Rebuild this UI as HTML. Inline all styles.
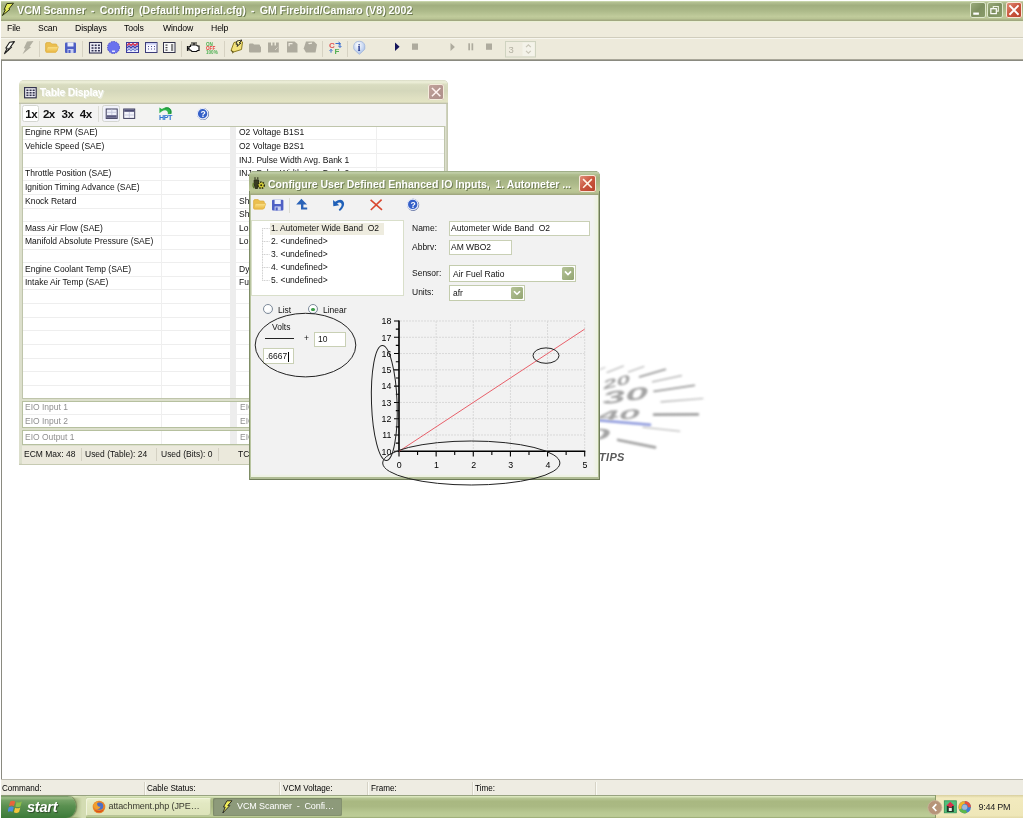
<!DOCTYPE html>
<html>
<head>
<meta charset="utf-8">
<title>VCM Scanner</title>
<style>
*{box-sizing:border-box;margin:0;padding:0}
html,body{width:1024px;height:819px;overflow:hidden;background:#fff}
body{filter:blur(0.45px);position:relative;font-family:"Liberation Sans",sans-serif;font-size:9px;color:#000}
.abs{position:absolute}
.t{position:absolute;white-space:nowrap;line-height:1}
/* main title bar */
#title{left:0;top:1px;width:1024px;height:20px;background:linear-gradient(#d3dfb8 0,#b3c092 7%,#a1ae7f 22%,#adba8a 50%,#c0cb9b 77%,#b9c494 88%,#a1a880 97%,#a1a880 100%)}
#title .cap{left:17px;top:4px;font-weight:bold;font-size:10.6px;color:#fff;text-shadow:1px 1px 0 #6d7b52;letter-spacing:0.1px;word-spacing:-0.5px}
.wbtn{position:absolute;top:0.8px;width:16.2px;height:16.6px;border-radius:2.5px;background:linear-gradient(135deg,#9fb07f,#7e9060 50%,#8c9e6d);box-shadow:inset 0 0 0 1px #dfe8cc;overflow:hidden}
.wbtn svg{position:absolute;left:0;top:0;width:100%;height:100%}
.wbtn.close{background:linear-gradient(135deg,#e39580,#c9553d 50%,#b8402a);box-shadow:inset 0 0 0 1px #f6e9d9}
/* menu */
#menu{left:0;top:21px;width:1024px;height:17px;background:#eeebdc;border-top:1px solid #eaf0d4;border-bottom:1px solid #d0cdbd}
#menu .t{top:1.6px;font-size:8.7px;letter-spacing:-0.14px}
#tool{left:0;top:38px;width:1024px;height:22px;background:#edeadb;border-top:1px solid #f7f6ee;border-bottom:1px solid #a9a799}
#mdi{left:1px;top:60px;width:1022px;height:718.6px;background:#fff;border-left:1px solid #8a8a80;border-top:1px solid #8a8a80}
#status{left:0;top:778.6px;width:1024px;height:17px;background:#eeece2;border-top:1px solid #bdbbb0}
#status .t{top:3.4px;font-size:9.5px;transform:scaleX(0.853);transform-origin:0 0}
#task{left:0;top:795px;width:1024px;height:23px;background:linear-gradient(#98a381 0,#98a381 3%,#dde9bf 6%,#cbd9ac 10%,#b8c795 14%,#a9b881 27%,#aab983 50%,#b8c892 76%,#bdcc97 93%,#9fb07a 98%)}

#td{left:19.2px;top:80px;width:428.4px;height:384.5px;background:#dcdfcc;border-radius:5px 5px 0 0;overflow:hidden;box-shadow:inset -1.6px -1.2px 0 #c6cab2}
.tdtitle{left:0;top:0;width:100%;height:23.5px;background:linear-gradient(#d9dbc5 0,#eef0da 8%,#d9dcc0 20%,#d4d7bb 45%,#dfe0c2 75%,#e3e4c4 92%,#c0c2ac 97%,#c0c2ac 100%);border-radius:5px 5px 0 0}
.tdtitle .t{font-weight:bold;font-size:10.4px;letter-spacing:-0.2px;color:#fff;text-shadow:1px 1px 0 #e9ecdf}
.tdtool{left:2.2px;top:23.5px;width:424.6px;height:22px;background:#f3f3f2}
.tdgrid{left:2.6px;top:45.5px;width:423.6px;height:273.5px;background:#fff;border:1px solid #bfc5ab;border-width:1px 1px 1.5px 1px;overflow:hidden}
.rl{left:0;width:100%;height:1px;background:#eeeeee;margin-top:-0.6px}
.t.g{font-size:9.4px;color:#111;transform:scaleX(0.905);transform-origin:0 0;margin-top:-1.6px}
.t.ge{font-size:9.4px;color:#8f8f8f;transform:scaleX(0.905);transform-origin:0 0;margin-top:-1.6px}
.eio{left:3px;width:423.5px;background:#fff;border:1px solid #b6c09f;border-width:1px 1px 1.5px 1px;overflow:hidden}
.tdstat{left:3px;top:366px;width:423.5px;height:17.5px;background:#ebe9dc}
.tdstat .t{font-size:9.4px;color:#111;transform:scaleX(0.905);transform-origin:0 0;margin-top:-1px}
.vs{top:2px;width:1px;height:13px;background:#d4d1c3}

#dlg{left:248.5px;top:171px;width:351.5px;height:308.5px;background:#7f8d62;border-radius:5px 5px 0 0;overflow:hidden}
.dtitle{left:0;top:0;width:100%;height:24px;background:linear-gradient(#8f9f78 0,#c5d2ac 7%,#b0bf90 14%,#a3b181 28%,#adba8a 55%,#bcc897 80%,#b6c191 90%,#a1a880 98%);border-radius:5px 5px 0 0}
.dtitle .t{font-weight:bold;font-size:10.5px;color:#fff;text-shadow:1px 1px 0 #6d7b52}
.dbody{left:1px;top:24px;width:349.5px;height:283px;background:#f2f2f2;border:1.5px solid #e6ecd8;border-top:0}
.tree{left:0.5px;top:25px;width:153px;height:76px;background:#fff;border:1px solid #d9dfca}
.tree .sel{left:17.8px;top:1.5px;width:114px;height:12.5px;background:#eeecdf}
.t.f{font-size:9.4px;color:#111;transform:scaleX(0.905);transform-origin:0 0;margin-top:-1px}
.inp{background:#fff;border:1px solid #c9d0b5}
.cmb{background:#fff;border:1px solid #c3ccad}
.cbtn{right:1px;top:1px;bottom:1px;width:12px;background:linear-gradient(135deg,#b5c398,#93a571);border-radius:1.5px}
.radio{width:10.3px;height:10.3px;border-radius:50%;border:1px solid #7d8a9a;background:radial-gradient(circle at 35% 35%,#fff 40%,#e4e8ec)}
.radio.on::after{content:"";position:absolute;left:2.4px;top:2.4px;width:3.6px;height:3.6px;border-radius:50%;background:#3f9f4a}

.startb{left:0;top:0.5px;width:76px;height:22.2px;border-radius:0 9px 11px 0/0 12px 12px 0;background:linear-gradient(#6f9460 0,#9dbd88 8%,#74a266 20%,#5a9050 45%,#4a8545 75%,#3c7a38 100%);box-shadow:1px 0 1.5px #5d7045}
.st{left:27px;top:4px;font-size:14.5px;font-weight:bold;font-style:italic;color:#fff;text-shadow:1px 1px 1px #2d4a28;letter-spacing:-0.2px}
.tb{top:2.8px;height:18.4px;border-radius:2px;background:linear-gradient(#e9efcc 0,#e2e8c2 30%,#dce3b9 100%);box-shadow:inset 1px 1px 0 #f0f4dc,inset -1px -1px 0 #b9c498}
.tb.on{background:#8d9a7a;box-shadow:inset 1px 1px 1px #7c8868,inset -1px -1px 0 #84916f}
.tb .t{font-size:9px;letter-spacing:-0.1px}
.tray{left:934.6px;top:0;width:89.4px;height:24px;background:linear-gradient(#d8cf9e 0,#f2eabe 12%,#efe7b9 85%,#ddd3a0 100%);border-left:1px solid #8a9a68}
.tray .t{font-size:9px;letter-spacing:-0.25px}

.pbtn{background:#fff;border:1px solid #d4d6d0;border-radius:2.5px}
.t.x{top:4.6px;font-size:11.6px;font-weight:bold;color:#111;letter-spacing:-0.45px}
.sv{top:2px;width:1px;height:13px;background:#d6d3c6;box-shadow:1px 0 0 #fafaf4}
.wbtn.close.tdc{background:linear-gradient(135deg,#c4a59e,#b3948e 60%,#ad8f8a);box-shadow:inset 0 0 0 1px #f4ecdc}
</style>
</head>
<body>
<!-- MAIN TITLE -->
<div id="title" class="abs">
  <svg class="abs" style="left:0;top:-1px" width="18" height="20" viewBox="0 0 18 20"><path d="M6.8 3.6 L13.5 3.2 L8.8 9 L10 9.3 L2.4 15.5 L5.4 9.8 L4.2 9.5 Z" fill="#e6ec58" stroke="#2a3010" stroke-width="1"/></svg>
  <div class="t cap">VCM Scanner &nbsp;- &nbsp;Config &nbsp;(Default Imperial.cfg) &nbsp;- &nbsp;GM Firebird/Camaro (V8) 2002</div>
  <div class="wbtn" style="left:969.5px"><svg width="16" height="16" viewBox="0 0 16 16"><rect x="3.2" y="10.2" width="5.6" height="2.2" fill="#fff"/></svg></div>
  <div class="wbtn" style="left:987.3px"><svg width="16" height="16" viewBox="0 0 16 16"><path d="M6.2 5.8V4.2h5v4.6h-1.4" fill="none" stroke="#eef3e2" stroke-width="1.1"/><rect x="3.8" y="6.4" width="5.4" height="4.9" fill="none" stroke="#fff" stroke-width="1.2"/></svg></div>
  <div class="wbtn close" style="left:1006px"><svg width="16" height="16" viewBox="0 0 16 16"><path d="M3.4 3.2l9 9.2M12.4 3.2l-9 9.2" stroke="#fff" stroke-width="1.9"/></svg></div>
</div>
<!-- MENU -->
<div id="menu" class="abs">
  <div class="t" style="left:7px">File</div>
  <div class="t" style="left:38px">Scan</div>
  <div class="t" style="left:75px">Displays</div>
  <div class="t" style="left:124px">Tools</div>
  <div class="t" style="left:163px">Window</div>
  <div class="t" style="left:211px">Help</div>
</div>
<!-- TOOLBAR -->
<div id="tool" class="abs"></div>
<!--TB-START-->
<svg class="abs" style="left:0;top:38px" width="560" height="22" viewBox="0 38 560 22" font-family="Liberation Sans, sans-serif">
  <defs>
    <linearGradient id="gfold" x1="0" y1="0" x2="0" y2="1"><stop offset="0" stop-color="#fbe38b"/><stop offset="1" stop-color="#e9b63f"/></linearGradient>
    <radialGradient id="ginfo" cx="0.4" cy="0.3" r="0.8"><stop offset="0" stop-color="#fff"/><stop offset="1" stop-color="#9db8e6"/></radialGradient>
  </defs>
  <!-- separators -->
  <g stroke="#d6d2c2" stroke-width="1"><path d="M39.5 41V57M82.5 41V57M181.5 41V57M224.5 41V57M322.5 41V57M347.5 41V57"/></g>
  <!-- pen -->
  <path d="M9.6 42.2 L14.4 41.6 L10.4 47 L11.6 47.2 L4.6 53.6 L7.2 48.2 L5.8 48 Z" fill="#fdfdf6" stroke="#1c1c1c" stroke-width="1.1" stroke-linejoin="round"/>
  <path d="M7.6 50.6 L9.6 47.6" stroke="#1c1c1c" stroke-width="1.1"/>
  <!-- gray lightning -->
  <path d="M27 41.5 L33.5 41 L29.5 46.8 L31.2 47 L22.5 54.3 L25.5 48.5 L23.8 48.2 Z" fill="#b1afa1"/>
  <!-- folder -->
  <path d="M45.6 44 q0 -1.4 1.4 -1.4 h3.4 l1.4 1.4 h3.8 q1.4 0 1.4 1.4 v5.6 h-11.4 Z" fill="#ecc050" stroke="#d9a93a" stroke-width="0.7"/>
  <path d="M47.6 46.4 h10 q1 0 0.6 1 l-1.6 4 q-0.4 1 -1.5 1 h-8.4 q-1.2 0 -0.9 -1 Z" fill="url(#gfold)" stroke="#e2b548" stroke-width="0.7"/>
  <!-- save -->
  <rect x="65" y="42.5" width="11" height="10.5" rx="1" fill="#4e5fc4"/>
  <rect x="67.5" y="42.5" width="6" height="4" fill="#e9ecfb"/>
  <rect x="67.5" y="49" width="6" height="4" fill="#c9cff1"/><rect x="68.5" y="50" width="2" height="3" fill="#4e5fc4"/>
  <!-- table icon -->
  <rect x="89.5" y="42.5" width="12" height="10.5" fill="#f4f4fb" stroke="#2e2e50" stroke-width="1.1"/>
  <g fill="#2e2e50"><rect x="91.5" y="44.5" width="2" height="1.6"/><rect x="94.7" y="44.5" width="2" height="1.6"/><rect x="97.9" y="44.5" width="2" height="1.6"/><rect x="91.5" y="47.2" width="2" height="1.6"/><rect x="94.7" y="47.2" width="2" height="1.6"/><rect x="97.9" y="47.2" width="2" height="1.6"/><rect x="91.5" y="49.9" width="2" height="1.6"/><rect x="94.7" y="49.9" width="2" height="1.6"/><rect x="97.9" y="49.9" width="2" height="1.6"/></g>
  <!-- blue circle -->
  <circle cx="113.5" cy="47.5" r="6" fill="#6a72ee" stroke="#4848c8" stroke-width="1" stroke-dasharray="1.5 1"/>
  <rect x="112" y="50.5" width="3" height="1.5" fill="#dfe2ff"/>
  <!-- wave -->
  <rect x="126.5" y="42.5" width="12" height="10" fill="#eef0ff" stroke="#3a3a9a" stroke-width="1"/>
  <path d="M127 45.5 l2 -2 l2 2 l2 -2 l2 2 l2 -2 l1 1" stroke="#d03050" stroke-width="1.3" fill="none"/>
  <path d="M127 48 l2 -2 l2 2 l2 -2 l2 2 l2 -2 l1 1" stroke="#4040b0" stroke-width="1.3" fill="none"/>
  <path d="M127 50.8 l2 -2 l2 2 l2 -2 l2 2 l2 -2 l1 1" stroke="#7080d0" stroke-width="1.1" fill="none"/>
  <!-- grid2 -->
  <rect x="145.5" y="42.5" width="11.5" height="10" fill="#f6f6ff" stroke="#3c3c78" stroke-width="1"/>
  <rect x="146" y="43" width="10.5" height="1.6" fill="#c8cdf5"/>
  <g fill="#4a4a90"><rect x="148" y="46" width="1" height="1"/><rect x="151" y="46" width="1" height="1"/><rect x="154" y="46" width="1" height="1"/><rect x="148" y="48.5" width="1" height="1"/><rect x="151" y="48.5" width="1" height="1"/><rect x="154" y="48.5" width="1" height="1"/></g>
  <!-- list icon -->
  <rect x="163.5" y="42.5" width="11.5" height="10" fill="#f8f8f8" stroke="#33334a" stroke-width="1"/>
  <g fill="#444"><rect x="165.5" y="44.5" width="2" height="1.2"/><rect x="165.5" y="47" width="2" height="1.2"/><rect x="165.5" y="49.5" width="2" height="1.2"/><rect x="171" y="44" width="2.2" height="7" fill="#888"/></g>
  <!-- engine -->
  <path d="M191 43 h6 M194 43 v1.5 M190.5 45 h6 l1 1 h1.5 v4.5 h-1.5 l-1 1 h-4.5 l-1.5 -1.5 h-1.5 v-3.5 h1.5 Z M187.5 46 v5 M187.5 48.5 h1.5" fill="#fff" stroke="#111" stroke-width="1.2"/>
  <!-- ON OFF 100% -->
  <text x="206" y="45.6" font-size="4.6" font-weight="bold" fill="#4caf50">ON</text>
  <text x="206" y="49.6" font-size="4.6" font-weight="bold" fill="#e53935">OFF</text>
  <text x="206" y="53.6" font-size="4.6" font-weight="bold" fill="#4caf50">100%</text>
  <!-- yellow lightning folder -->
  <path d="M234 42.5 l7 -1.5 l1.5 1 l-1 7.5 l-8 2.5 l-2.5 -1.5 Z" fill="#f3e27a" stroke="#8b7a1e" stroke-width="1"/>
  <path d="M237 41 l5 -1 l-3 3 l2 0 l-4 3.5 l1 -2.5 l-2 0.3 Z" fill="#fff79a" stroke="#222" stroke-width="0.9"/>
  <path d="M231 50.5 l2.5 1.5 l-1.5 1.2" fill="none" stroke="#5a4e10" stroke-width="1"/>
  <!-- gray icons -->
  <g fill="#aeab9e">
    <path d="M249 44.5 q0 -1 1 -1 h3 l1 1 h5 q1 0 1 1 v1 h1 v5 q0 1 -1 1 h-10 q-1 0 -1 -1 Z"/>
    <path d="M268 42.5 h10.8 v10 h-10.8 Z M271 42.5 v3 h1.5 v-3 M274.5 42.5 v3 h1.5 v-3"/>
    <path d="M287 41.5 h7.5 l3 2.5 v8.5 h-10.5 Z"/>
    <path d="M306 41.5 h8 l3 3 l-1.5 8 h-9.5 l-2.3 -4 Z"/>
  </g>
  <path d="M288.5 43 h4 v1.2 h-2.8 v2 h-1.2 Z M308 43 l4 -0.5 v1.2 l-3 0.5 Z" fill="#efecdf"/>
  <path d="M275 50 l2.5 -2.5" stroke="#d8d5c8" stroke-width="1"/>
  <!-- C/F -->
  <text x="329" y="47.8" font-size="8" font-weight="bold" fill="#e05050">C</text>
  <text x="334.5" y="53.6" font-size="8" font-weight="bold" fill="#55b055">F</text>
  <path d="M335.5 43.5 h4.5 M338.5 42 l2 1.5 l-2 1.5 M340 44 v3 M338.6 46 l1.4 1.6 l1.4 -1.6" stroke="#3a6fd0" stroke-width="1" fill="none"/>
  <path d="M331 49.5 v3.2 M329.6 50.8 l1.4 -1.5 l1.4 1.5" stroke="#3a6fd0" stroke-width="1" fill="none"/>
  <!-- info -->
  <path d="M359.3 41.3 a5.6 5.6 0 0 1 3 10.4 l-3 2.6 l-3 -2.6 a5.6 5.6 0 0 1 3 -10.4 Z" fill="url(#ginfo)" stroke="#9fb4d8" stroke-width="0.8"/>
  <text x="357.7" y="51" font-size="9.5" font-weight="bold" font-family="Liberation Serif, serif" fill="#1b2f8a">i</text>
  <!-- play etc -->
  <path d="M395 42.5 l4.6 4.2 l-4.6 4.2 Z" fill="#14145a"/>
  <rect x="412" y="43.5" width="6" height="6.3" fill="#aeab9e"/>
  <path d="M450.5 43 l4.4 4 l-4.4 4 Z" fill="#aeab9e"/>
  <rect x="468.3" y="43.3" width="1.7" height="7" fill="#aeab9e"/><rect x="471.5" y="43.3" width="1.7" height="7" fill="#aeab9e"/>
  <rect x="486" y="43.5" width="6" height="6.3" fill="#aeab9e"/>
  <!-- spinner -->
  <rect x="505.5" y="41.5" width="30" height="15.5" fill="#efecdf" stroke="#cfd3c0" stroke-width="1"/>
  <rect x="522.5" y="42.5" width="12" height="13.5" fill="#f4f3ea"/>
  <text x="508.5" y="53" font-size="9.5" fill="#b3b0a2">3</text>
  <path d="M526 47.2 l2.4 -2.4 l2.4 2.4 M526 50.8 l2.4 2.4 l2.4 -2.4" stroke="#c9c6b8" stroke-width="1.2" fill="none"/>
</svg>
<!--TB-END-->
<!-- MDI -->
<div id="mdi" class="abs"></div>
<svg class="abs" style="left:600px;top:350px" width="120" height="125" viewBox="600 350 120 125" font-family="Liberation Sans, sans-serif">
  <defs><filter id="bl" x="-10%" y="-30%" width="120%" height="160%"><feGaussianBlur stdDeviation="0.9"/></filter><filter id="bl2" x="-10%" y="-30%" width="120%" height="160%"><feGaussianBlur stdDeviation="1"/></filter></defs>
  <g filter="url(#bl)" stroke="#9c9c9c" stroke-linecap="round" fill="none">
   <path d="M607 372.5L623.4 366M628.5 372L643.9 366.5M652.4 381.9L681.5 375.6M661 401.9L702.9 398.5M643 427.2L679.8 431.2" stroke-width="1.1" stroke="#ababab"/>
   <path d="M639.6 376.8L665.3 369.4M654.1 391.3L694.3 385.3" stroke-width="1.8"/>
   <path d="M654.1 414.7L697.8 414.4M618.2 440L655 447.4" stroke-width="2.8" stroke="#a2a2a2"/>
   <path d="M598 420.2L650 424.7" stroke="#8a96dc" stroke-width="2.6"/>
   <path d="M600 369.5l5 -2" stroke-width="1" stroke="#b5b5b5"/>
  </g>
  <g filter="url(#bl2)" fill="#a4a4a4" font-weight="bold" font-style="italic">
   <text transform="translate(604 389.5) rotate(-14) scale(2.0 1)" font-size="12.5">20</text>
   <text transform="translate(603 404.5) rotate(-8) scale(2.45 1)" font-size="17">30</text>
   <text transform="translate(598 420.5) rotate(-3) scale(2.8 1)" font-size="13.5">40</text>
   <text transform="translate(585 439) rotate(2) scale(2.9 1)" font-size="15.5">0</text>
  </g>
  <text x="599" y="460.8" font-size="11" font-weight="bold" font-style="italic" fill="#5a5a5a" letter-spacing="0.3">TIPS</text>
</svg>
<!-- TABLE-DISPLAY -->
<div id="td" class="abs">
 <div class="abs tdtitle"><svg class="abs" style="left:4.5px;top:6.8px" width="13" height="12" viewBox="0 0 13 12"><rect x="0.6" y="0.6" width="11.6" height="10.2" fill="#f4f4fb" stroke="#34344e" stroke-width="1.2"/><g fill="#34344e"><rect x="2.4" y="2.5" width="2.1" height="1.6"/><rect x="5.5" y="2.5" width="2.1" height="1.6"/><rect x="8.6" y="2.5" width="2.1" height="1.6"/><rect x="2.4" y="5" width="2.1" height="1.6"/><rect x="5.5" y="5" width="2.1" height="1.6"/><rect x="8.6" y="5" width="2.1" height="1.6"/><rect x="2.4" y="7.5" width="2.1" height="1.6"/><rect x="5.5" y="7.5" width="2.1" height="1.6"/><rect x="8.6" y="7.5" width="2.1" height="1.6"/></g></svg><div class="t" style="left:20.5px;top:8.3px">Table Display</div><div class="wbtn close tdc" style="left:408.5px;top:4.2px;width:16.2px;height:16.2px"><svg viewBox="0 0 16 16"><path d="M3.9 3.9l8.3 8.2M12.2 3.9l-8.3 8.2" stroke="#fff3f0" stroke-width="1.5"/></svg></div></div>
 <div class="abs tdtool">
  <div class="abs pbtn" style="left:0.6px;top:1.7px;width:17.5px;height:16.5px"></div>
  <div class="abs pbtn" style="left:80.2px;top:1.7px;width:18.2px;height:16.5px;background:#f1f2fa"></div>
  <div class="abs" style="left:76.5px;top:2px;width:1px;height:16px;background:#dcdcd6"></div>
  <div class="t x" style="left:3.9px">1x</div><div class="t x" style="left:21.5px">2x</div><div class="t x" style="left:40.2px">3x</div><div class="t x" style="left:58.3px">4x</div>
  <svg class="abs" style="left:82.6px;top:3.5px" width="130" height="16" viewBox="104 107 130 16" font-family="Liberation Sans, sans-serif">
   <rect x="106.2" y="109" width="11" height="9.4" fill="#eef0fa" stroke="#3c3c5c" stroke-width="1"/><rect x="106.7" y="115.2" width="10" height="2.6" fill="#5a5a80"/><path d="M107 112.3h9.4M111.8 109.5v5.5" stroke="#c3c6dc" stroke-width="0.9"/>
   <rect x="123.7" y="109" width="11" height="9.4" fill="#f4f5fc" stroke="#3c3c5c" stroke-width="1"/><rect x="124.2" y="109.4" width="10" height="2.4" fill="#4c4c74"/><path d="M124.5 115h9.4M129.3 112v6" stroke="#c3c6dc" stroke-width="0.9"/>
   <!-- HPT -->
   <path d="M159.4 107.4 v5.8 l2.2 -1.6 q3.6 -2.6 5.6 -0.4 q1.2 1.6 0.4 3 l3.6 -0.2 q1.4 -3.6 -1.2 -5.6 q-3.4 -2.4 -8.2 0.6 Z" fill="#2eb34a"/>
   <path d="M165 108.2 q4.6 -1.2 5.6 2.4 l0.2 3.2" fill="none" stroke="#1c8a3a" stroke-width="1"/>
   <text x="159" y="119.8" font-size="7.2" font-weight="bold" fill="#2b74d0" letter-spacing="-0.55">HPT</text>
   <!-- help -->
   <circle cx="203" cy="114" r="5.6" fill="none" stroke="#4a5c96" stroke-width="1"/><circle cx="202.6" cy="113.7" r="5.3" fill="#3560c8" stroke="#e4e9f8" stroke-width="1.3"/>
   <text x="200.4" y="116.9" font-size="8.6" font-weight="bold" fill="#fff">?</text>
  </svg>
 </div>
 <div class="abs tdgrid">
  <div class="abs rl" style="top:13.40px"></div>
  <div class="abs rl" style="top:27.05px"></div>
  <div class="abs rl" style="top:40.70px"></div>
  <div class="abs rl" style="top:54.35px"></div>
  <div class="abs rl" style="top:68.00px"></div>
  <div class="abs rl" style="top:81.65px"></div>
  <div class="abs rl" style="top:95.30px"></div>
  <div class="abs rl" style="top:108.95px"></div>
  <div class="abs rl" style="top:122.60px"></div>
  <div class="abs rl" style="top:136.25px"></div>
  <div class="abs rl" style="top:149.90px"></div>
  <div class="abs rl" style="top:163.55px"></div>
  <div class="abs rl" style="top:177.20px"></div>
  <div class="abs rl" style="top:190.85px"></div>
  <div class="abs rl" style="top:204.50px"></div>
  <div class="abs rl" style="top:218.15px"></div>
  <div class="abs rl" style="top:231.80px"></div>
  <div class="abs rl" style="top:245.45px"></div>
  <div class="abs rl" style="top:259.10px"></div>
  <div class="abs" style="left:138.2px;top:0;width:1px;height:272px;background:#efefef"></div>
  <div class="abs" style="left:207.3px;top:0;width:6.3px;height:272px;background:#ededed"></div>
  <div class="abs" style="left:352.8px;top:0;width:1px;height:272px;background:#efefef"></div>
  <div class="t g" style="left:1.8px;top:2.35px">Engine RPM (SAE)</div>
  <div class="t g" style="left:216.7px;top:2.35px">O2 Voltage B1S1</div>
  <div class="t g" style="left:1.8px;top:16.00px">Vehicle Speed (SAE)</div>
  <div class="t g" style="left:216.7px;top:16.00px">O2 Voltage B2S1</div>
  <div class="t g" style="left:216.7px;top:29.65px">INJ. Pulse Width Avg. Bank 1</div>
  <div class="t g" style="left:1.8px;top:43.30px">Throttle Position (SAE)</div>
  <div class="t g" style="left:216.7px;top:43.30px">INJ. Pulse Width Avg. Bank 2</div>
  <div class="t g" style="left:1.8px;top:56.95px">Ignition Timing Advance (SAE)</div>
  <div class="t g" style="left:1.8px;top:70.60px">Knock Retard</div>
  <div class="t g" style="left:216.7px;top:70.60px">Short Term Fuel Trim B1</div>
  <div class="t g" style="left:216.7px;top:84.25px">Short Term Fuel Trim B2</div>
  <div class="t g" style="left:1.8px;top:97.90px">Mass Air Flow (SAE)</div>
  <div class="t g" style="left:216.7px;top:97.90px">Long Term Fuel Trim B1</div>
  <div class="t g" style="left:1.8px;top:111.55px">Manifold Absolute Pressure (SAE)</div>
  <div class="t g" style="left:216.7px;top:111.55px">Long Term Fuel Trim B2</div>
  <div class="t g" style="left:1.8px;top:138.85px">Engine Coolant Temp (SAE)</div>
  <div class="t g" style="left:216.7px;top:138.85px">Dynamic Airflow</div>
  <div class="t g" style="left:1.8px;top:152.50px">Intake Air Temp (SAE)</div>
  <div class="t g" style="left:216.7px;top:152.50px">Fuel Trim Cell</div>
 </div>
 <div class="abs eio" style="top:320.5px;height:27.5px"><div class="rl abs" style="top:13px"></div><div class="abs" style="left:138.2px;top:0;width:1px;height:100%;background:#efefef"></div><div class="abs" style="left:207.3px;top:0;width:6.3px;height:100%;background:#ededed"></div><div class="t ge" style="left:1.8px;top:2.5px">EIO Input 1</div><div class="t ge" style="left:1.8px;top:16px">EIO Input 2</div><div class="t ge" style="left:216.7px;top:2.5px">EIO Input 3</div><div class="t ge" style="left:216.7px;top:16px">EIO Input 4</div></div>
 <div class="abs eio" style="top:350px;height:14.5px"><div class="abs" style="left:138.2px;top:0;width:1px;height:100%;background:#efefef"></div><div class="abs" style="left:207.3px;top:0;width:6.3px;height:100%;background:#ededed"></div><div class="t ge" style="left:1.8px;top:2.5px">EIO Output 1</div><div class="t ge" style="left:216.7px;top:2.5px">EIO Output 2</div></div>
 <div class="abs tdstat"><div class="t" style="left:2px;top:4px">ECM Max: 48</div><div class="t" style="left:63px;top:4px">Used (Table): 24</div><div class="t" style="left:139px;top:4px">Used (Bits): 0</div><div class="t" style="left:216px;top:4px">TCM Max: 8</div><div class="abs vs" style="left:58.5px"></div><div class="abs vs" style="left:133.5px"></div><div class="abs vs" style="left:195.5px"></div></div>
</div>
<!-- DIALOG -->
<div id="dlg" class="abs">
 <div class="abs dtitle"><div class="t" style="left:19.5px;top:8px">Configure User Defined Enhanced IO Inputs, &nbsp;1. Autometer ...</div><div class="wbtn close" style="left:330.5px;top:4.2px;width:16.8px;height:16.8px"><svg viewBox="0 0 16 16"><path d="M3.9 3.9l8.3 8.2M12.2 3.9l-8.3 8.2" stroke="#fff4e6" stroke-width="1.5"/></svg></div></div>
 <div class="abs dbody">
  <div class="abs tree"><div class="abs sel"></div>
   <div class="t f" style="left:19.2px;top:3.30px">1. Autometer Wide Band &nbsp;O2</div>
   <div class="t f" style="left:19.2px;top:16.20px">2. &lt;undefined&gt;</div>
   <div class="t f" style="left:19.2px;top:29.10px">3. &lt;undefined&gt;</div>
   <div class="t f" style="left:19.2px;top:42.00px">4. &lt;undefined&gt;</div>
   <div class="t f" style="left:19.2px;top:54.90px">5. &lt;undefined&gt;</div>
   <svg class="abs" style="left:0;top:0" width="30" height="76"><path d="M10.5 7.5V59.5M10.5 7.5h7M10.5 20.5h7M10.5 33.5h7M10.5 46.5h7M10.5 59.5h7" stroke="#bdbdbd" stroke-width="0.9" stroke-dasharray="0.8 0.8" fill="none"/></svg>
  </div>
  <div class="t f" style="left:161.5px;top:28.5px">Name:</div>
  <div class="t f" style="left:161.5px;top:47.5px">Abbrv:</div>
  <div class="t f" style="left:161.5px;top:73.5px">Sensor:</div>
  <div class="t f" style="left:161.5px;top:92.8px">Units:</div>
  <div class="abs inp" style="left:198px;top:25.5px;width:141px;height:15px"><div class="t f" style="left:1.2px;top:2.5px">Autometer Wide Band &nbsp;O2</div></div>
  <div class="abs inp" style="left:198px;top:44.5px;width:63.5px;height:15px"><div class="t f" style="left:1.2px;top:2.5px">AM WBO2</div></div>
  <div class="abs cmb" style="left:198px;top:70px;width:127.5px;height:16.5px"><div class="t f" style="left:3px;top:3.5px">Air Fuel Ratio</div><div class="abs cbtn"><svg viewBox="0 0 12 13" width="100%" height="100%" preserveAspectRatio="none"><path d="M3 4.6l3 3.2l3 -3.2" fill="none" stroke="#fff" stroke-width="1.7"/></svg></div></div>
  <div class="abs cmb" style="left:198px;top:89.5px;width:76.5px;height:16px"><div class="t f" style="left:3px;top:3.5px">afr</div><div class="abs cbtn"><svg viewBox="0 0 12 13" width="100%" height="100%" preserveAspectRatio="none"><path d="M3 4.6l3 3.2l3 -3.2" fill="none" stroke="#fff" stroke-width="1.7"/></svg></div></div>
  <div class="abs radio" style="left:12.4px;top:109.2px"></div><div class="t f" style="left:27.7px;top:110.5px">List</div>
  <div class="abs radio on" style="left:57.3px;top:109.2px"></div><div class="t f" style="left:72.6px;top:110.5px">Linear</div>
  <div class="t f" style="left:21px;top:128.2px">Volts</div>
  <div class="abs" style="left:14.6px;top:142.9px;width:28.7px;height:1px;background:#222"></div>
  <div class="t f" style="left:53.8px;top:139px">+</div>
  <div class="abs inp" style="left:63px;top:136.5px;width:32.2px;height:15.1px"><div class="t f" style="left:3px;top:2.8px">10</div></div>
  <div class="abs inp" style="left:12.2px;top:153.2px;width:31.7px;height:15.5px"><div class="t f" style="left:2px;top:3px">.6667</div><div class="abs" style="left:24.3px;top:2.5px;width:1px;height:10px;background:#000"></div></div>
 </div>
 <div class="abs" style="left:344px;top:24px;width:5.2px;height:282px;background:linear-gradient(90deg,#f2f2f2,#eef2e3 60%)"></div>
 <div class="abs" style="left:2px;top:303.2px;width:347px;height:3px;background:linear-gradient(#f2f2f2,#eef2e3 60%)"></div>
 <div class="abs" style="left:349px;top:24px;width:1.5px;height:284px;background:#b0bc95"></div>
 <div class="abs" style="left:1px;top:306px;width:349.5px;height:1.5px;background:#b0bc95"></div>
 <div class="abs" style="left:350.5px;top:20px;width:1px;height:289px;background:#6f7c59"></div>
 <div class="abs" style="left:0;top:307.5px;width:351.5px;height:1px;background:#6f7c59"></div>
 <div class="abs" style="left:0;top:20px;width:1px;height:289px;background:#7f8d66"></div>
 <div class="abs" style="left:1px;top:24px;width:1.2px;height:283px;background:#b9c5a0"></div>
</div>
<svg class="abs" style="left:249px;top:172px" width="180" height="44" viewBox="249 172 180 44" font-family="Liberation Sans, sans-serif">
  <!-- title icon: tools + gear -->
  <path d="M255 177.2 v2.2 M257.8 177.2 v2.2 M254.2 180 h4.4 v3.6 l-1 4.8 h-2.4 l-1 -4.8 Z" fill="#3a3d22" stroke="#2a2c18" stroke-width="1"/>
  <path d="M253.4 183 q-1 3 0.6 5" stroke="#5e7a2a" stroke-width="1.4" fill="none"/>
  <circle cx="261.2" cy="185.2" r="3.1" fill="#d8d23a" stroke="#2c2e12" stroke-width="1.5" stroke-dasharray="1.6 1"/>
  <circle cx="261.2" cy="185.2" r="1" fill="#2c2e12"/>
  <!-- folder -->
  <path d="M253.6 201 q0 -1.4 1.4 -1.4 h3.2 l1.4 1.4 h3.4 q1.4 0 1.4 1.4 v5.6 h-10.8 Z" fill="#ecc050" stroke="#d9a93a" stroke-width="0.7"/>
  <path d="M255.4 203.4 h9.6 q1 0 0.6 1 l-1.5 3.8 q-0.4 1 -1.5 1 h-8 q-1.2 0 -0.9 -1 Z" fill="url(#gfold)" stroke="#e2b548" stroke-width="0.7"/>
  <!-- save -->
  <rect x="272" y="199.8" width="11.4" height="10.6" rx="1" fill="#4e5fc4"/>
  <rect x="274.6" y="199.8" width="6.2" height="4.2" fill="#eef0fc"/>
  <rect x="274.6" y="206.4" width="6.2" height="4" fill="#c9cff1"/><rect x="275.6" y="207.4" width="2.1" height="3" fill="#4e5fc4"/>
  <path d="M289.5 198V213" stroke="#dcdcd4" stroke-width="1"/>
  <!-- up arrow -->
  <path d="M301.4 198.8 l5.6 5.8 h-3.6 v2.8 h3.8 v2.2 h-6.2 v-5 h-4.8 Z" fill="#2a63b8"/>
  <!-- undo -->
  <path d="M333 200 l0.3 6.2 l6 -1 l-2.2 -1.6 q2.6 -2 4.2 0 q1.4 2.2 -2.6 6.2 l1.2 1.2 q5.6 -4.8 3.8 -9 q-2.4 -4.4 -8.6 -0.2 Z" fill="#2060b8"/>
  <!-- red X -->
  <path d="M370.6 199.8 l11.4 10 M381.6 199.6 l-10.8 10.4" stroke="#d9472f" stroke-width="1.6" fill="none"/>
  <!-- help -->
  <circle cx="413.1" cy="204.8" r="5.6" fill="none" stroke="#4a5c96" stroke-width="1"/><circle cx="412.7" cy="204.4" r="5.3" fill="#3560c8" stroke="#e4e9f8" stroke-width="1.3"/>
  <text x="410.5" y="207.6" font-size="8.6" font-weight="bold" fill="#fff">?</text>
</svg>
<!--CHART-->
<svg class="abs" style="left:240px;top:296px" width="380" height="200" viewBox="240 296 380 200" font-family="Liberation Sans, sans-serif" font-size="8.8">
 <path d="M400.0 435.01H584.7M400.0 418.72H584.7M400.0 402.43H584.7M400.0 386.14H584.7M400.0 369.85H584.7M400.0 353.56H584.7M400.0 337.27H584.7M400.0 320.98H584.7M436.14 321.0V450.3M473.28 321.0V450.3M510.42 321.0V450.3M547.56 321.0V450.3M584.70 321.0V450.3" stroke="#d9d9d9" stroke-width="1" stroke-dasharray="2 1" fill="none"/>
 <path d="M399.0 320.5V451.3H585.3" stroke="#000" stroke-width="1.6" fill="none"/>
 <path d="M394.0 451.30H399.0M395.8 443.16H399.0M394.0 435.01H399.0M395.8 426.87H399.0M394.0 418.72H399.0M395.8 410.58H399.0M394.0 402.43H399.0M395.8 394.29H399.0M394.0 386.14H399.0M395.8 378.00H399.0M394.0 369.85H399.0M395.8 361.71H399.0M394.0 353.56H399.0M395.8 345.42H399.0M394.0 337.27H399.0M395.8 329.12H399.0M394.0 320.98H399.0M399.00 451.3V456.6M417.57 451.3V455.0M436.14 451.3V456.6M454.71 451.3V455.0M473.28 451.3V456.6M491.85 451.3V455.0M510.42 451.3V456.6M528.99 451.3V455.0M547.56 451.3V456.6M566.13 451.3V455.0M584.70 451.3V456.6" stroke="#000" stroke-width="1.1" fill="none"/>
 <text x="391.3" y="454.5" text-anchor="end">10</text>
 <text x="391.3" y="438.2" text-anchor="end">11</text>
 <text x="391.3" y="421.9" text-anchor="end">12</text>
 <text x="391.3" y="405.6" text-anchor="end">13</text>
 <text x="391.3" y="389.3" text-anchor="end">14</text>
 <text x="391.3" y="373.1" text-anchor="end">15</text>
 <text x="391.3" y="356.8" text-anchor="end">16</text>
 <text x="391.3" y="340.5" text-anchor="end">17</text>
 <text x="391.3" y="324.2" text-anchor="end">18</text>
 <text x="399.3" y="468" text-anchor="middle">0</text>
 <text x="436.4" y="468" text-anchor="middle">1</text>
 <text x="473.6" y="468" text-anchor="middle">2</text>
 <text x="510.7" y="468" text-anchor="middle">3</text>
 <text x="547.9" y="468" text-anchor="middle">4</text>
 <text x="585.0" y="468" text-anchor="middle">5</text>
 <path d="M399.0 451.3L584.7 329.1" stroke="#e8606a" stroke-width="1" fill="none"/>
 <g fill="none" stroke="#222" stroke-width="1">
  <ellipse cx="305.5" cy="345.1" rx="50.3" ry="31.8"/>
  <ellipse cx="384.3" cy="403" rx="12.8" ry="57.5" transform="rotate(-2 384.3 403)"/>
  <ellipse cx="471.3" cy="463" rx="88.6" ry="22"/>
  <ellipse cx="546" cy="355.6" rx="13" ry="7.7"/>
 </g>
</svg>
<!--/CHART-->
<!-- STATUS -->
<div id="status" class="abs">
  <div class="t" style="left:2px">Command:</div>
  <div class="t" style="left:147px">Cable Status:</div>
  <div class="t" style="left:283px">VCM Voltage:</div>
  <div class="t" style="left:371px">Frame:</div>
  <div class="t" style="left:475px">Time:</div>
  <div class="abs sv" style="left:143.5px"></div><div class="abs sv" style="left:279px"></div><div class="abs sv" style="left:367px"></div><div class="abs sv" style="left:472px"></div><div class="abs sv" style="left:595px"></div>
</div>
<!-- TASKBAR -->
<div id="task" class="abs">
  <div class="abs startb"><svg class="abs" style="left:8.2px;top:3.2px" width="17" height="16" viewBox="0 0 17 16"><path d="M2.2 2.6 q2.6 -1.6 5 -0.2 l-1.2 4.6 q-2.4 -1.3 -5 0.2 Z" fill="#e8643c"/><path d="M8.6 2.9 q2.6 1.3 5.2 -0.3 l-1.2 4.6 q-2.6 1.6 -5.2 0.3 Z" fill="#8fc04a"/><path d="M0.7 8.4 q2.6 -1.6 5 -0.2 l-1.2 4.6 q-2.4 -1.3 -5 0.2 Z" fill="#4a8be0"/><path d="M7.1 8.7 q2.6 1.3 5.2 -0.3 l-1.2 4.6 q-2.6 1.6 -5.2 0.3 Z" fill="#f3c63c"/></svg><div class="t st">start</div></div>
  <div class="abs" style="left:76px;top:1px;width:10px;height:21.5px;background:linear-gradient(90deg,rgba(215,224,182,0),#d3dcb2 60%)"></div><div class="abs tb" style="left:85.5px;width:125.5px"><svg class="abs" style="left:6.5px;top:2px" width="14" height="14" viewBox="0 0 14 14"><circle cx="7" cy="7" r="6.3" fill="#e8862a"/><circle cx="7.6" cy="6.2" r="3.6" fill="#4a6fc8"/><path d="M1.2 5 q2 -3.5 5.5 -3.8 q-2.5 1.8 -1.2 4.2 q1 1.6 3.2 1.2 q-1 3 -4 2.6 q-3 -0.6 -3.5 -4.2 Z" fill="#f0a030"/><path d="M2 9.5 q2.5 3.5 6.5 2.7 q3 -1 3.6 -4 q-1.6 2.8 -4.6 2.8 q-3.3 -0.2 -5.5 -1.5 Z" fill="#d8501e"/></svg><div class="t" style="left:23px;top:4.5px;color:#3a3a30">attachment.php (JPE…</div></div>
  <div class="abs tb on" style="left:213px;width:129px"><svg class="abs" style="left:8.5px;top:2px" width="11" height="14" viewBox="0 0 11 14"><path d="M5 0.8 L10 0.8 L5.8 5.6 L7.8 5.6 L0.8 13 L3.2 7 L1.4 7 Z" fill="#f1ee5a" stroke="#222" stroke-width="0.9"/></svg><div class="t" style="left:24px;top:4.5px;color:#fff">VCM Scanner &nbsp;- &nbsp;Confi…</div></div>
  <div class="abs tray"><div class="t" style="left:43px;top:7.5px;color:#222">9:44 PM</div></div>
  <svg class="abs" style="left:926px;top:3px" width="48" height="18" viewBox="926 798 48 18"><circle cx="934.9" cy="807.6" r="7" fill="#b69478" stroke="#c9b39c" stroke-width="0.8"/><path d="M936.3 804.2 l-3.2 3.4 l3.2 3.4" fill="none" stroke="#fff" stroke-width="1.7"/><rect x="944.3" y="800.8" width="12" height="12" fill="#4fbf7a" stroke="#2f8f55" stroke-width="0.8"/><rect x="946.8" y="806" width="7" height="6" fill="#1e3b2a"/><rect x="948.8" y="808" width="3" height="3" fill="#e8f4ea"/><path d="M946 806 l4.3 -4.3 l4.3 4.3 h-2.6 v1.6 h-3.4 v-1.6 Z" fill="#d8304a"/><circle cx="964.7" cy="807.2" r="6.2" fill="#3f7fd0"/><path d="M964.7 801 a6.2 6.2 0 0 1 6.2 6.2 h-3 a3.2 3.2 0 0 0 -3.2 -3.2 Z" fill="#e8503a"/><path d="M964.7 801 a6.2 6.2 0 0 0 -5.6 8.8 l2.7 -1.3 a3.2 3.2 0 0 1 2.9 -4.5 Z" fill="#f0b428"/><path d="M959.1 809.8 a6.2 6.2 0 0 0 8 3 l-1.2 -2.8 a3.2 3.2 0 0 1 -4.1 -1.5 Z" fill="#5db848"/><circle cx="964.7" cy="807.2" r="2.6" fill="#9fb8d8"/></svg>
</div>
<div class="abs" style="left:0;top:0;width:1px;height:819px;background:#fff"></div>
<div class="abs" style="left:1023px;top:0;width:1px;height:819px;background:#fff"></div>
<div class="abs" style="left:0;top:817.6px;width:1024px;height:2px;background:#fff"></div>
</body>
</html>
